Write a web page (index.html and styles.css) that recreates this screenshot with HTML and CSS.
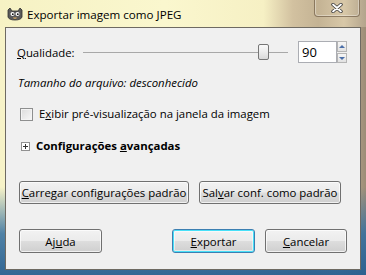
FILE: index.html
```html
<!doctype html>
<html lang="pt-BR">
<head>
    <meta charset="utf-8">
    <title>Exportar imagem como JPEG</title>
    <link rel="stylesheet" href="styles.css">
</head>
<body>
<div class="window">

    <!--  barra de título  -->
    <div class="titlebar">
        <svg class="appIcon" width="16" height="14" viewBox="0 0 16 14">
            <path d="M1 3 L3 1 L5 4 L11 4 L13 1 L15 3 L15 10 Q14 13 8 13 Q2 13 1 10 Z" fill="#5a5a5a" stroke="#2e2e2e" stroke-width="0.8"/>
            <circle cx="5.5" cy="7" r="2" fill="#fff"/>
            <circle cx="10.5" cy="7" r="2" fill="#fff"/>
            <circle cx="5.8" cy="7.2" r="0.9" fill="#111"/>
            <circle cx="10.8" cy="7.2" r="0.9" fill="#111"/>
            <path d="M6.5 10.5 Q8 12 9.5 10.5" stroke="#c8a060" stroke-width="1.2" fill="none"/>
        </svg>
        <span class="title">Exportar imagem como JPEG</span>
        <div class="closeBtn">
            <svg width="12" height="10" viewBox="0 0 12 10">
                <path d="M2 1.5 L10 8.5 M10 1.5 L2 8.5" stroke="#3a3a3a" stroke-width="3.4" stroke-linecap="round"/>
                <path d="M2 1.5 L10 8.5 M10 1.5 L2 8.5" stroke="#fff" stroke-width="1.8" stroke-linecap="round"/>
            </svg>
        </div>
    </div>

    <!--  área do diálogo  -->
    <div class="client">
        <div class="quality">
            <span class="qLabel"><u>Q</u>ualidade:</span>
            <div class="slider">
                <span class="track"></span>
                <span class="thumb"></span>
                <span class="track rest"></span>
            </div>
            <div class="spin">
                <span class="spinValue">90</span>
                <div class="spinBtns">
                    <span class="spinUp"></span>
                    <span class="spinDown"></span>
                </div>
            </div>
        </div>

        <p class="fileSize">Tamanho do arquivo: desconhecido</p>

        <div class="check">
            <span class="checkBox"></span>
            <span>E<u>x</u>ibir pré-visualização na janela da imagem</span>
        </div>

        <div class="expander">
            <span class="plusBox"></span>
            <span>Configurações <u>a</u>vançadas</span>
        </div>

        <div class="defaults">
            <button class="btn loadBtn"><u>C</u>arregar configurações padrão</button>
            <button class="btn saveBtn">Sal<u>v</u>ar conf. como padrão</button>
        </div>

        <div class="actions">
            <button class="btn actBtn">Aj<u>u</u>da</button>
            <button class="btn actBtn default"><u>E</u>xportar</button>
            <button class="btn actBtn cancel"><u>C</u>ancelar</button>
        </div>
    </div>
</div>
</body>
</html>
```

FILE: styles.css
```css
* {
    margin: 0;
    padding: 0;
    box-sizing: border-box;
}

html, body {
    width: 366px;
    height: 275px;
    overflow: hidden;
    font-family: "Open Sans", "Noto Sans", sans-serif;
    font-size: 11.4px;
    color: #000;
}

.window {
    width: 366px;
    height: 275px;
    padding: 0 5px 5px 5px;
    display: flex;
    flex-direction: column;
    background:
        linear-gradient(180deg, rgba(0, 0, 0, 0) 0%, rgba(0, 0, 0, 0) 68%, rgba(50, 110, 160, 0.85) 85%, rgba(40, 95, 145, 0.95) 100%),
        linear-gradient(90deg, #f7f3c8 0%, #f9f6cb 55%, #e6d9b4 74%, #c8b797 84%, #d6c6a6 92%, #9c8c76 100%);
}

.titlebar {
    height: 27px;
    display: flex;
    align-items: center;
    background: linear-gradient(90deg, #f6f2c4 0%, #faf7ce 45%, #f6f0c4 72%, #d2c1a0 80%, #c4b394 87%, #d8c8a8 94%, #b3a48c 100%);
    margin: 0 -5px;
    padding-left: 7px;
    padding-right: 6px;
}

.appIcon {
    width: 16px;
    height: 14px;
    margin-top: 1px;
}

.title {
    margin-left: 4px;
    margin-top: 1px;
    font-size: 11.6px;
}

.closeBtn {
    margin-left: auto;
    align-self: flex-start;
    width: 46px;
    height: 18px;
    margin-top: -1px;
    border: 1px solid rgba(90, 70, 50, 0.55);
    border-top: none;
    border-radius: 0 0 4px 4px;
    box-shadow: inset 0 0 0 1px rgba(255, 255, 255, 0.35);
    display: flex;
    align-items: center;
    justify-content: center;
    padding-top: 1px;
}

.client {
    flex: 1;
    background: #f0f0f0;
    border: 1px solid #6e6a62;
    padding: 13px 13px 0 11px;
    display: flex;
    flex-direction: column;
}

/* linha da qualidade */
.quality {
    height: 22px;
    display: flex;
    align-items: center;
}

.qLabel {
    width: 66px;
}

.slider {
    flex: 1;
    height: 16px;
    display: flex;
    align-items: center;
}

.track {
    flex: 176;
    height: 1px;
    background: #a8a8a8;
}

.track.rest {
    flex: 19;
}

.thumb {
    width: 11px;
    height: 16px;
    border: 1px solid #767676;
    border-radius: 2px;
    background: linear-gradient(180deg, #fafafa 0%, #ececec 50%, #d9d9d9 100%);
}

.spin {
    margin-left: 10px;
    width: 49px;
    height: 22px;
    display: flex;
}

.spinValue {
    width: 39px;
    height: 22px;
    border: 1px solid #abadb3;
    background: #fff;
    padding-left: 3px;
    line-height: 20px;
    font-size: 13px;
}

.spinBtns {
    width: 10px;
    display: flex;
    flex-direction: column;
    gap: 1px;
}

.spinUp, .spinDown {
    flex: 1;
    border: 1px solid #b5b5b5;
    background: linear-gradient(180deg, #f6f6f6, #e2e2e2);
    position: relative;
}

.spinUp::after, .spinDown::after {
    content: "";
    position: absolute;
    left: 1px;
    top: 3px;
    border-left: 3px solid transparent;
    border-right: 3px solid transparent;
}

.spinUp::after {
    border-bottom: 3px solid #4a6ea8;
}

.spinDown::after {
    border-top: 3px solid #4a6ea8;
}

.fileSize {
    margin-top: 12px;
    padding-left: 1px;
    line-height: 16px;
    font-style: italic;
}

.check {
    margin-top: 15px;
    display: flex;
    align-items: center;
    padding-left: 3px;
    line-height: 16px;
}

.checkBox {
    width: 13px;
    height: 13px;
    border: 1px solid #8e8f8f;
    background: linear-gradient(135deg, #dcdcdc, #f8f8f8);
    box-shadow: inset 0 0 0 1px #f4f4f4;
    margin-right: 6px;
}

.expander {
    margin-top: 16px;
    display: flex;
    align-items: center;
    padding-left: 4px;
    font-weight: bold;
    line-height: 16px;
}

.plusBox {
    width: 9px;
    height: 9px;
    border: 1px solid #919191;
    background: #fff;
    margin-right: 6px;
    position: relative;
}

.plusBox::before, .plusBox::after {
    content: "";
    position: absolute;
    background: #333;
}

.plusBox::before {
    left: 1px;
    top: 3px;
    width: 5px;
    height: 1px;
}

.plusBox::after {
    left: 3px;
    top: 1px;
    width: 1px;
    height: 5px;
}

/* botões */
.btn {
    font-family: inherit;
    font-size: 11.4px;
    color: #000;
    border: 1px solid #707070;
    border-radius: 3px;
    background: linear-gradient(180deg, #f2f2f2 0%, #ebebeb 48%, #dddddd 52%, #cfcfcf 100%);
    box-shadow: inset 0 0 0 1px rgba(255, 255, 255, 0.7);
    white-space: nowrap;
}

.defaults {
    margin-top: 27px;
    display: flex;
    padding-left: 2px;
    gap: 10px;
}

.loadBtn {
    width: 170px;
    height: 23px;
}

.saveBtn {
    width: 142px;
    height: 23px;
}

.actions {
    margin-top: 25px;
    display: flex;
    padding-left: 2px;
}

.actBtn {
    width: 83px;
    height: 24px;
}

.actBtn.default {
    margin-left: auto;
    border-color: #3c7fb1;
    box-shadow: inset 0 0 0 1px #48e0f8, inset 0 0 0 2px rgba(255, 255, 255, 0.5);
}

.actBtn.cancel {
    margin-left: 10px;
    width: 82px;
}
```
